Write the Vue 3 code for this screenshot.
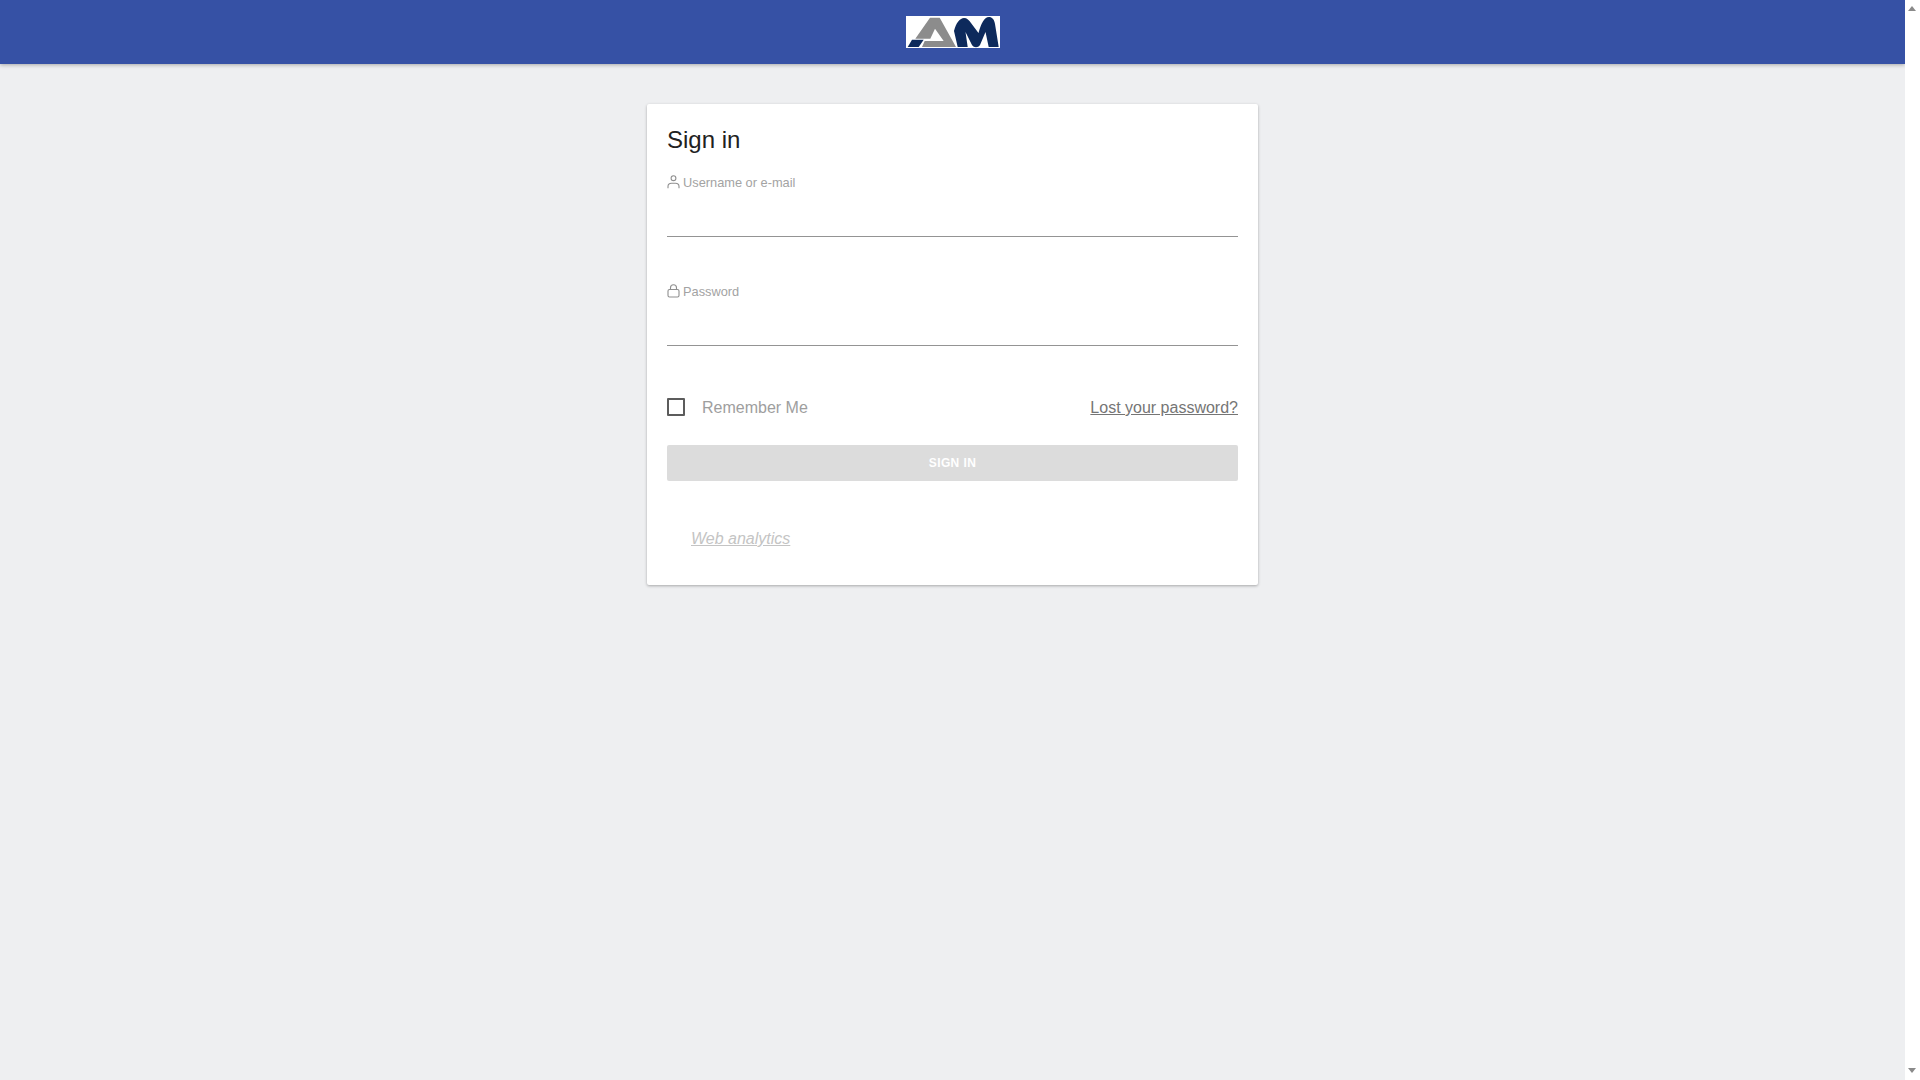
<script setup>
</script>

<template>
  <div class="page">
    <div class="main">
      <header class="topbar">
        <svg class="logo" viewBox="0 0 94 32" width="94" height="32">
          <rect width="94" height="32" fill="#fff" />
          <path d="M24 1.700h9.700L50 31H16l2.700-6h19L29 12.700 24.300 22.700H9.300z" fill="#8c8c8c" />
          <path d="M6 23.700h11.700L12.700 31H1.700z" fill="#0d2a5c" />
          <path d="M48 15C50 7 54 2 58 2 61 2 63 4 65 7L72.500 17C75 8 78 1 83 1 86 1 88 3 89 8L92.700 31H82.700L79.500 16 74 29C72 32 68 32 66 29L59.500 16 61.700 31H51.700z" fill="#0d2a5c" />
        </svg>
      </header>
      <main class="content">
        <form class="card" @submit.prevent>
          <h1 class="title">Sign in</h1>
          <label class="field">
            <span class="field-label">
              <svg class="field-icon" viewBox="0 0 14 14" width="14" height="14">
                <circle cx="6.500" cy="3.200" r="2.400" />
                <path d="M1 13.200v-1.700c0-2 1.500-3.200 3.500-3.200h4c2 0 3.500 1.200 3.500 3.200v1.700" />
              </svg>
              Username or e-mail
            </span>
            <input type="text" class="field-input" />
          </label>
          <label class="field">
            <span class="field-label">
              <svg class="field-icon" viewBox="0 0 14 14" width="14" height="14">
                <rect x="1" y="5.500" width="11" height="7.500" rx="1.500" />
                <path d="M3.500 5.500V3.800a3 3 0 0 1 6 0v1.700" />
              </svg>
              Password
            </span>
            <input type="password" class="field-input" />
          </label>
          <div class="options">
            <label class="remember">
              <span class="box"></span>
              <span class="remember-text">Remember Me</span>
            </label>
            <a href="#" class="lost">Lost your password?</a>
          </div>
          <button type="submit" class="submit" disabled>SIGN IN</button>
          <a href="#" class="analytics">Web analytics</a>
        </form>
      </main>
    </div>
    <div class="scrollbar">
      <span class="arrow up"></span>
      <span class="arrow down"></span>
    </div>
  </div>
</template>

<style scoped>
.page {
  display: flex;
  height: 1080px;
  overflow: hidden;
  font-family: "Liberation Sans", Arial, sans-serif;
}

.main {
  flex: 1;
  background: #eeeff1;
}

.topbar {
  height: 64px;
  background: #3651a5;
  box-shadow: 0 1px 4px rgba(0, 0, 0, 0.3);
  display: flex;
  align-items: center;
  justify-content: center;
}

.logo {
  display: block;
}

.content {
  display: flex;
  justify-content: center;
  padding-top: 40px;
}

.card {
  width: 611px;
  box-sizing: border-box;
  padding: 20px 20px 37px;
  background: #fff;
  border-radius: 2px;
  box-shadow: 0 1px 3px rgba(0, 0, 0, 0.3);
}

.title {
  margin: 0;
  font-size: 24px;
  line-height: 32px;
  font-weight: 400;
  color: #212121;
}

.field {
  display: block;
  height: 109px;
  box-sizing: border-box;
  padding-top: 18px;
}

.field-label {
  display: flex;
  align-items: center;
  gap: 2px;
  font-size: 12.8px;
  line-height: 18px;
  color: #a3a3a3;
}

.field-icon {
  margin-top: -2px;
  fill: none;
  stroke: #8f8f8f;
  stroke-width: 1.1;
}

.field-input {
  display: block;
  width: 100%;
  height: 32px;
  box-sizing: border-box;
  margin-top: 13px;
  border: none;
  border-bottom: 1px solid #949494;
  outline: none;
  background: transparent;
}

.options {
  display: flex;
  align-items: center;
  justify-content: space-between;
  height: 24px;
  margin-top: 21px;
  font-size: 16px;
}

.remember {
  display: flex;
  align-items: center;
  color: #9e9e9e;
}

.remember-text,
.lost {
  margin-top: 2px;
}

.box {
  width: 18px;
  height: 18px;
  box-sizing: border-box;
  margin-right: 17px;
  border: 2px solid #5c5c5c;
  border-radius: 1px;
}

.lost {
  color: #757575;
}

.submit {
  display: block;
  width: 100%;
  height: 36px;
  margin-top: 26px;
  border: none;
  border-radius: 2px;
  background: #dcdcdc;
  color: #fff;
  font-family: inherit;
  font-size: 12px;
  font-weight: 700;
  letter-spacing: 0.4px;
}

.analytics {
  display: block;
  width: max-content;
  margin: 49px 0 0 24px;
  font-size: 16px;
  font-style: italic;
  color: #c4c4c4;
}

.scrollbar {
  position: relative;
  width: 15px;
  background: #fff;
}

.arrow {
  position: absolute;
  left: 3px;
  width: 0;
  height: 0;
  border-left: 4.5px solid transparent;
  border-right: 4.5px solid transparent;
}

.up {
  top: 6px;
  border-bottom: 5px solid #8a8a8a;
}

.down {
  bottom: 7px;
  border-top: 5px solid #8a8a8a;
}
</style>
